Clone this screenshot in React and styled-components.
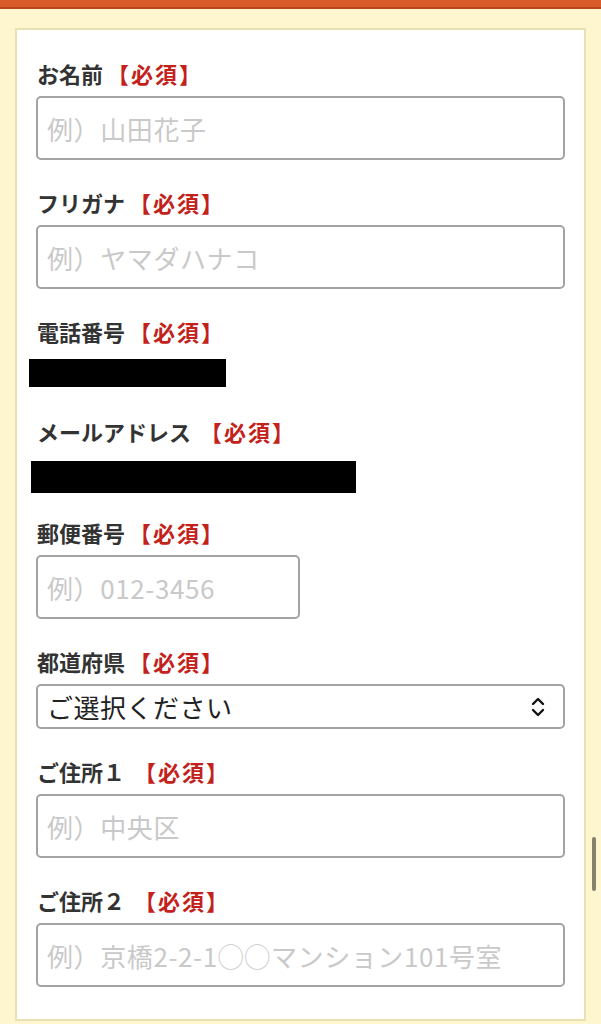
import styled, { createGlobalStyle } from "styled-components"
import React from 'react';

const GlobalStyle = createGlobalStyle`
  html, body {
    margin: 0;
    padding: 0;
    background: #fdf6cf;
    font-family: "Noto Sans CJK JP", "Noto Sans", sans-serif;
  }
`

const fields = [
  { label: "お名前", placeholder: "例）山田花子" },
  { label: "フリガナ", placeholder: "例）ヤマダハナコ" },
  { label: "電話番号", masked: 197, maskH: 28, maskOffset: -7, maskGap: 13, maskAfter: 2 },
  { label: "メールアドレス ", masked: 325, maskH: 32, maskOffset: -5, maskGap: 15, maskAfter: -3 },
  { label: "郵便番号", placeholder: "例）012-3456", width: 264 },
  { label: "都道府県", select: "ご選択ください" },
  { label: "ご住所１ ", placeholder: "例）中央区" },
  { label: "ご住所２ ", placeholder: "例）京橋2-2-1◯◯マンション101号室" },
]

function App() {
  return (
    <>
      <GlobalStyle />
      <TopBar />
      <Page>
        <Card>
          {fields.map((f) => (
            <Field key={f.label}>
              <Label>
                {f.label}<Required>【必須】</Required>
              </Label>
              {f.masked && (
                <Mask
                  $w={f.masked}
                  $h={f.maskH}
                  $offset={f.maskOffset}
                  $gap={f.maskGap}
                  $after={f.maskAfter}
                />
              )}
              {f.placeholder && (
                <Input placeholder={f.placeholder} $w={f.width} readOnly />
              )}
              {f.select && (
                <Select>
                  <span>{f.select}</span>
                  <svg width="16" height="22" viewBox="0 0 16 22" fill="none" stroke="#111" strokeWidth="2.4" strokeLinecap="round" strokeLinejoin="round">
                    <path d="M3 8 L8 3 L13 8" />
                    <path d="M3 14 L8 19 L13 14" />
                  </svg>
                </Select>
              )}
            </Field>
          ))}
        </Card>
      </Page>
      <ScrollThumb />
    </>
  )
}

const TopBar = styled.div`
  height: 7px;
  background: #d95b29;
  border-bottom: 2px solid #b8461c;
`

const Page = styled.div`
  padding: 19px 15px 0 15px;
`

const Card = styled.div`
  width: 571px;
  box-sizing: border-box;
  background: #fff;
  border: 2px solid #e9e0b4;
  padding: 28px 19px 32px 19px;
  display: flex;
  flex-direction: column;
  gap: 27px;
`

const Field = styled.div`
  display: flex;
  flex-direction: column;
`

const Label = styled.div`
  font-size: 22px;
  line-height: 30px;
  font-weight: 700;
  color: #333;
  padding-left: 1px;
  margin-bottom: 8px;
  white-space: pre;
`

const Required = styled.span`
  color: #c3221b;
  margin-left: 4px;
  letter-spacing: 2px;
`

const Mask = styled.div`
  width: ${(p) => p.$w}px;
  height: ${(p) => p.$h}px;
  background: #000;
  margin-left: ${(p) => p.$offset}px;
  margin-top: ${(p) => p.$gap - 8}px;
  margin-bottom: ${(p) => p.$after}px;
`

const Input = styled.input`
  width: ${(p) => (p.$w ? `${p.$w}px` : "100%")};
  height: 64px;
  box-sizing: border-box;
  border: 2px solid #a3a3a3;
  border-radius: 5px;
  padding: 0 9px;
  font-family: inherit;
  font-size: 26px;
  letter-spacing: 0.6px;
  color: #333;
  outline: none;
  &::placeholder {
    color: #c9c9c9;
  }
`

const Select = styled.div`
  height: 45px;
  box-sizing: border-box;
  border: 2px solid #a3a3a3;
  border-radius: 5px;
  padding: 0 17px 0 9px;
  display: flex;
  align-items: center;
  justify-content: space-between;
  font-size: 26px;
  letter-spacing: 0.5px;
  color: #222;
`

const ScrollThumb = styled.div`
  position: fixed;
  left: 592px;
  top: 837px;
  width: 4px;
  height: 54px;
  border-radius: 2px;
  background: #85826c;
`

export default App
